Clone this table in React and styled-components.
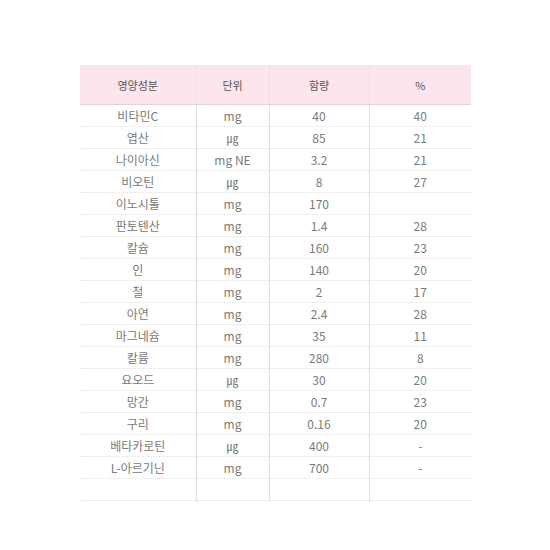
import React from 'react';
import styled, { createGlobalStyle } from 'styled-components';

const GlobalStyle = createGlobalStyle`
  body {
    margin: 0;
    background: #fff;
    font-family: "Noto Sans CJK KR", "Noto Sans", sans-serif;
  }
`;

const columns = [116, 73, 100, 102];

const rows = [
  ['비타민C', 'mg', '40', '40'],
  ['엽산', '㎍', '85', '21'],
  ['나이아신', 'mg NE', '3.2', '21'],
  ['비오틴', '㎍', '8', '27'],
  ['이노시톨', 'mg', '170', ''],
  ['판토텐산', 'mg', '1.4', '28'],
  ['칼슘', 'mg', '160', '23'],
  ['인', 'mg', '140', '20'],
  ['철', 'mg', '2', '17'],
  ['아연', 'mg', '2.4', '28'],
  ['마그네슘', 'mg', '35', '11'],
  ['칼륨', 'mg', '280', '8'],
  ['요오드', '㎍', '30', '20'],
  ['망간', 'mg', '0.7', '23'],
  ['구리', 'mg', '0.16', '20'],
  ['베타카로틴', '㎍', '400', '-'],
  ['L-아르기닌', 'mg', '700', '-'],
  ['', '', '', ''],
];

const Page = styled.div`
  padding: 65px 0 0 80px;
`;

const Table = styled.table`
  width: 391px;
  border-collapse: collapse;
  table-layout: fixed;
`;

const Col = styled.col`
  width: ${p => p.$w}px;
`;

const HeadCell = styled.th`
  height: 39px;
  padding: 0;
  background: #fde5ee;
  border-bottom: 1px solid #dcd6d8;
  border-left: ${p => (p.$first ? 'none' : '1px solid #ecdfe4')};
  font-size: 11px;
  font-weight: 400;
  color: #555;
  text-align: center;
`;

const Cell = styled.td`
  height: 21px;
  padding: 0;
  border-bottom: 1px dotted #e2e2e2;
  border-left: ${p => (p.$first ? 'none' : '1px solid #e0e0e0')};
  font-size: 12px;
  font-weight: 400;
  color: #7a7a7a;
  text-align: center;
  line-height: 21px;
`;

export default function App() {
  return (
    <Page>
      <GlobalStyle />
      <Table>
        <colgroup>
          {columns.map((w, i) => <Col key={i} $w={w} />)}
        </colgroup>
        <thead>
          <tr>
            <HeadCell $first>영양성분</HeadCell>
            <HeadCell>단위</HeadCell>
            <HeadCell>함량</HeadCell>
            <HeadCell>%</HeadCell>
          </tr>
        </thead>
        <tbody>
          {rows.map((r, i) => (
            <tr key={i}>
              {r.map((c, j) => (
                <Cell key={j} $first={j === 0}>{c}</Cell>
              ))}
            </tr>
          ))}
        </tbody>
      </Table>
    </Page>
  );
}
